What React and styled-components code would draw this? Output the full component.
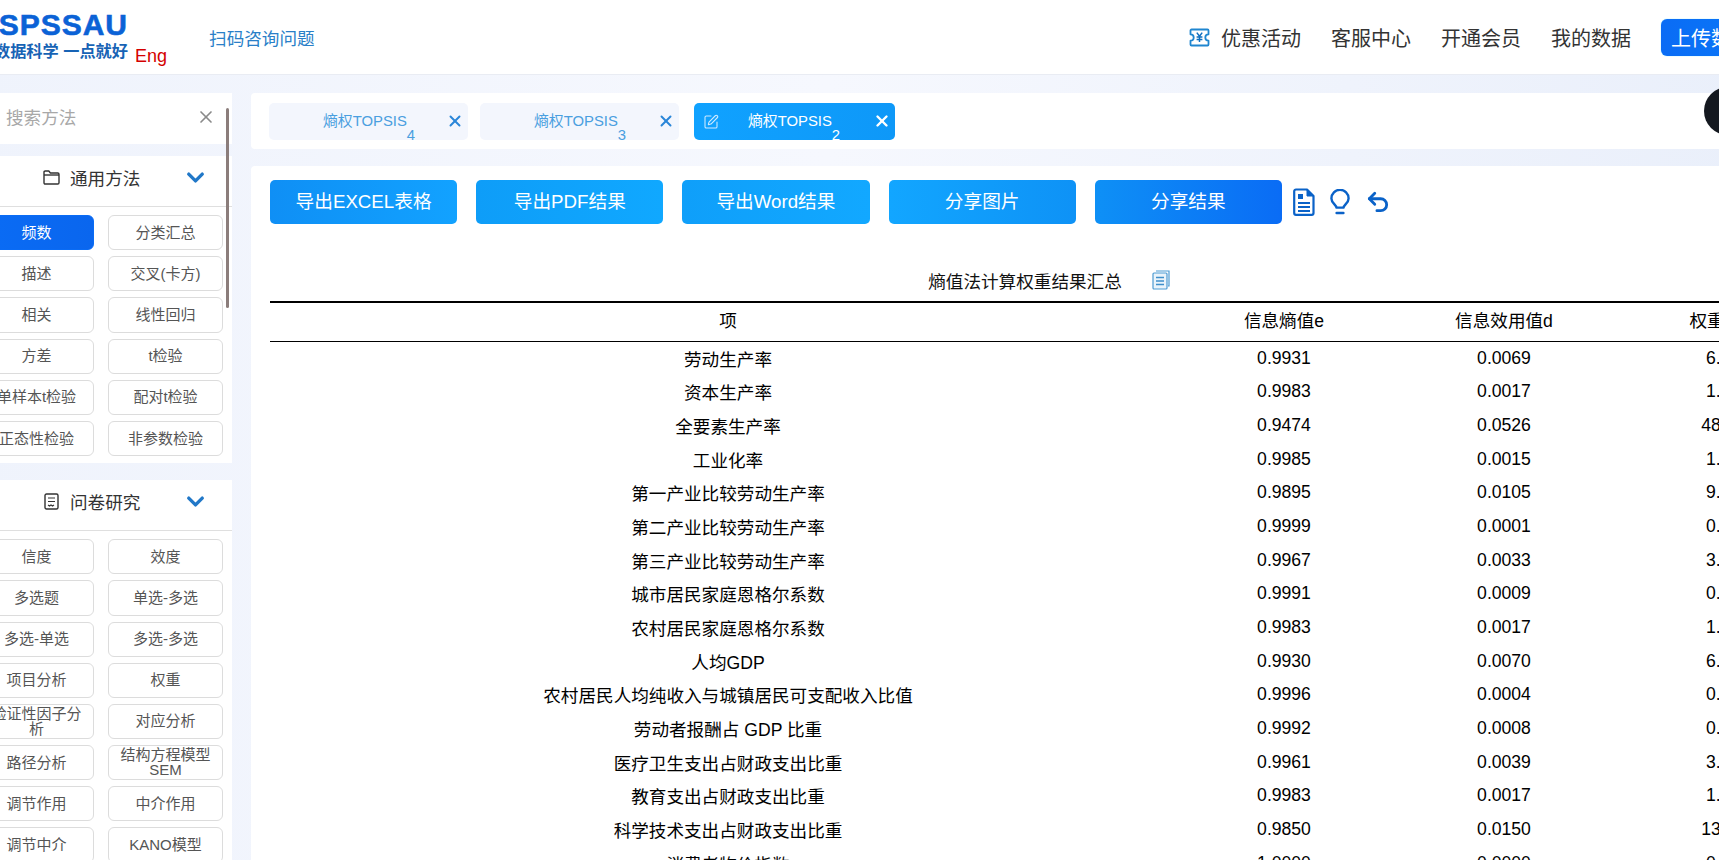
import React from "react";
import styled, { createGlobalStyle } from "styled-components";
import { ChevronDown, X, SquarePen, Undo2 } from "lucide-react";

const FONT = `"Liberation Sans", "Noto Sans CJK SC", sans-serif`;

const GlobalStyle = createGlobalStyle`
  html, body {
    margin: 0;
    height: 100%;
    overflow: hidden;
    background: #fff;
  }
  body {
    font-family: ${FONT};
  }
`;

const Page = styled.div`
  width: 1900px;
  height: 860px;
  margin-left: -28px;
  overflow: hidden;
  background: linear-gradient(90deg, #eff3fc 0%, #f6f8fe 45%, #e8eefa 100%);
`;

const Header = styled.header`
  height: 75px;
  display: flex;
  align-items: center;
  padding-right: 111px;
  background: #fff;
  border-bottom: 1px solid #e9ecf3;
  box-sizing: border-box;
`;

const Logo = styled.div`
  width: 156px;
  text-align: right;
  white-space: nowrap;
  margin-top: -3px;
`;

const LogoMark = styled.div`
  font-size: 30px;
  line-height: 31px;
  font-weight: 700;
  letter-spacing: 1px;
  color: #0b62d6;
  -webkit-text-stroke: 0.6px #0b62d6;
`;

const LogoSlogan = styled.div`
  font-size: 16.2px;
  line-height: 22px;
  font-weight: 700;
  color: #1763b5;
`;

const EngLink = styled.a`
  align-self: flex-end;
  margin: 0 0 7px 7px;
  font-size: 18px;
  line-height: 22px;
  color: #d40000;
`;

const QrLink = styled.a`
  margin-left: 42px;
  font-size: 17.6px;
  color: #2a7fc8;
`;

const Nav = styled.nav`
  margin-left: auto;
  display: flex;
  align-items: center;
  gap: 30px;
`;

const NavItem = styled.a`
  display: flex;
  align-items: center;
  gap: 11px;
  font-size: 20px;
  color: #333;
  white-space: nowrap;
`;

const UploadButton = styled.button`
  height: 37px;
  padding: 0 10px;
  border: 0;
  border-radius: 6px;
  background: linear-gradient(90deg, #0a6cf5, #0a78f8);
  box-shadow: 0 0 1px #3fe0ff;
  color: #fff;
  font-family: ${FONT};
  font-size: 20px;
  white-space: nowrap;
`;

const Body = styled.div`
  display: flex;
  gap: 19px;
  align-items: flex-start;
  padding-top: 18px;
`;

const Sidebar = styled.aside`
  position: relative;
  width: 260px;
  flex: none;
  display: flex;
  flex-direction: column;
`;

const ScrollThumb = styled.div`
  position: absolute;
  top: 15px;
  left: 254px;
  width: 3px;
  height: 200px;
  border-radius: 2px;
  background: #8b7d7b;
`;

const SearchBox = styled.div`
  height: 51px;
  display: flex;
  align-items: center;
  justify-content: space-between;
  padding: 0 16px 4px 34px;
  margin-bottom: 12px;
  box-sizing: border-box;
  background: #fff;
  font-size: 17.6px;
  color: #a8a8a8;
`;

const Section = styled.section`
  background: #fff;
  padding-bottom: 7px;
  margin-bottom: 17px;
`;

const SectionHead = styled.div`
  height: 51px;
  display: flex;
  align-items: center;
  gap: 10px;
  padding: 0 23px 8px 71px;
  border-bottom: 1px solid #dfdfdf;
  box-sizing: border-box;
  font-size: 17.6px;
  color: #333;

  > svg:last-child {
    margin-left: auto;
    color: #2178c8;
  }
`;

const MethodGrid = styled.div`
  display: grid;
  grid-template-columns: 115px 115px;
  grid-auto-rows: 35.2px;
  gap: 6px 14px;
  padding: 8px 9px 0 7px;
`;

const MethodButton = styled.button`
  padding: 0 6px 1px;
  border: 1px solid ${(p) => (p.$active ? "#0a6cf5" : "#dcdcdc")};
  border-radius: 6px;
  background: ${(p) => (p.$active ? "linear-gradient(90deg, #0a6cf5, #0a66ee)" : "#fff")};
  color: ${(p) => (p.$active ? "#fff" : "#555")};
  font-family: ${FONT};
  font-size: 15px;
  line-height: 15px;
`;

const Main = styled.main`
  flex: 1;
  min-width: 0;
  display: flex;
  flex-direction: column;
  gap: 17px;
`;

const TabBar = styled.div`
  position: relative;
  height: 56px;
  display: flex;
  align-items: center;
  gap: 12px;
  padding: 0 18px;
  background: #fff;
  border-radius: 4px 0 0 4px;
`;

const AvatarDot = styled.div`
  position: absolute;
  top: -6px;
  left: 1453px;
  width: 48px;
  height: 48px;
  border-radius: 50%;
  background: #14181f;
`;

const Tab = styled.div`
  position: relative;
  width: ${(p) => (p.$active ? "201px" : "199px")};
  height: 37px;
  flex: none;
  display: flex;
  align-items: center;
  margin-left: ${(p) => (p.$active ? "3px" : "0")};
  padding: 0 4px 3px 54px;
  box-sizing: border-box;
  border-radius: 5px;
  background: ${(p) => (p.$active ? "linear-gradient(90deg, #10a2ff, #0e98f8)" : "#f3f6fd")};
  color: ${(p) => (p.$active ? "#fff" : "#4a9fe0")};
  font-size: 14.85px;

  > svg:last-child {
    margin-left: auto;
    margin-top: 3px;
    color: ${(p) => (p.$active ? "#fff" : "#2a86d8")};
  }
`;

const TabEdit = styled(SquarePen)`
  position: absolute;
  left: 9px;
  top: 11px;
  color: #cfeaff;
`;

const TabIndex = styled.span`
  position: relative;
  top: 16px;
  line-height: 1;
`;

const Content = styled.div`
  padding: 14px 19px 0;
  height: 700px;
  background: #fff;
  border-radius: 4px 0 0 0;
`;

const Toolbar = styled.div`
  display: flex;
  align-items: center;
  gap: 19px;
`;

const ExportButton = styled.button`
  width: 187.2px;
  height: 44px;
  flex: none;
  padding: 0 0 5px;
  border: 0;
  border-radius: 5px;
  background: linear-gradient(90deg, ${(p) => p.$from}, ${(p) => p.$to});
  color: #fff;
  font-family: ${FONT};
  font-size: 18.7px;
`;

const ToolIcons = styled.div`
  display: flex;
  align-items: center;
  gap: 15px;
  margin-left: -8px;
  color: #0a62c8;
`;

const Caption = styled.div`
  width: 1558px;
  height: 39px;
  margin-top: 38px;
  padding-bottom: 3px;
  box-sizing: border-box;
  display: flex;
  align-items: center;
  justify-content: center;
  gap: 30px;
  font-size: 17.6px;
  color: #111;
`;

const ResultTable = styled.table`
  width: 1566px;
  table-layout: fixed;
  border-collapse: collapse;
  border-top: 2px solid #000;
  font-size: 17.6px;
  color: #000;
  text-align: center;

  th {
    height: 39px;
    padding: 0 0 5px;
    box-sizing: border-box;
    font-weight: 400;
    border-bottom: 1px solid #000;
  }
  td {
    height: 33.66px;
    padding: 0;
  }
`;

const sidebarGroups = [
  {
    title: "通用方法",
    icon: "folder",
    items: ["频数", "分类汇总", "描述", "交叉(卡方)", "相关", "线性回归", "方差", "t检验", "单样本t检验", "配对t检验", "正态性检验", "非参数检验"],
  },
  {
    title: "问卷研究",
    icon: "sheet",
    items: ["信度", "效度", "多选题", "单选-多选", "多选-单选", "多选-多选", "项目分析", "权重", "验证性因子分析", "对应分析", "路径分析", "结构方程模型SEM", "调节作用", "中介作用", "调节中介", "KANO模型"],
  },
];

const tabs = [
  { index: 4 },
  { index: 3 },
  { index: 2, active: true },
];

const exportButtons = [
  { label: "导出EXCEL表格", from: "#0f8ff5", to: "#12a2ff" },
  { label: "导出PDF结果", from: "#0e9df8", to: "#10a8ff" },
  { label: "导出Word结果", from: "#0f9ffa", to: "#12a8ff" },
  { label: "分享图片", from: "#12a6ff", to: "#0e92f6" },
  { label: "分享结果", from: "#0e90f6", to: "#0a6cf5" },
];

const rows = [
  ["劳动生产率", "0.9931", "0.0069", "6.39%"],
  ["资本生产率", "0.9983", "0.0017", "1.57%"],
  ["全要素生产率", "0.9474", "0.0526", "48.70%"],
  ["工业化率", "0.9985", "0.0015", "1.39%"],
  ["第一产业比较劳动生产率", "0.9895", "0.0105", "9.72%"],
  ["第二产业比较劳动生产率", "0.9999", "0.0001", "0.09%"],
  ["第三产业比较劳动生产率", "0.9967", "0.0033", "3.06%"],
  ["城市居民家庭恩格尔系数", "0.9991", "0.0009", "0.83%"],
  ["农村居民家庭恩格尔系数", "0.9983", "0.0017", "1.57%"],
  ["人均GDP", "0.9930", "0.0070", "6.48%"],
  ["农村居民人均纯收入与城镇居民可支配收入比值", "0.9996", "0.0004", "0.37%"],
  ["劳动者报酬占 GDP 比重", "0.9992", "0.0008", "0.74%"],
  ["医疗卫生支出占财政支出比重", "0.9961", "0.0039", "3.61%"],
  ["教育支出占财政支出比重", "0.9983", "0.0017", "1.57%"],
  ["科学技术支出占财政支出比重", "0.9850", "0.0150", "13.89%"],
  ["消费者物价指数", "1.0000", "0.0000", "0.00%"],
];

const TicketIcon = () => (
  <svg width="21" height="19" viewBox="0 0 21 19" fill="none" stroke="#1f86d0" strokeWidth="1.8" strokeLinejoin="round">
    <path d="M2.5 1.5h16a1 1 0 0 1 1 1v3.8a3.2 3.2 0 0 0 0 6.4v3.8a1 1 0 0 1-1 1h-16a1 1 0 0 1-1-1v-3.8a3.2 3.2 0 0 0 0-6.4V2.5a1 1 0 0 1 1-1z" />
    <path d="M7.8 4.6l2.7 3.6 2.7-3.6M10.5 8.2V14M7.6 9h5.8M7.6 11.4h5.8" stroke="#0f6fc0" strokeWidth="1.5" strokeLinejoin="miter" />
  </svg>
);

const FolderIcon = () => (
  <svg width="17" height="15" viewBox="0 0 17 15" fill="none" stroke="#333" strokeWidth="1.4" strokeLinejoin="round">
    <path d="M1 2.2c0-.7.5-1.2 1.2-1.2h3.6l1.6 2h7.4c.7 0 1.2.5 1.2 1.2v8.6c0 .7-.5 1.2-1.2 1.2H2.2c-.7 0-1.2-.5-1.2-1.2z" />
    <path d="M1 5h15" />
  </svg>
);

const SheetIcon = () => (
  <svg width="17" height="17" viewBox="-1 0 17 17" fill="none" stroke="#333" strokeWidth="1.4">
    <rect x="1" y="1" width="13" height="15" rx="1.5" />
    <path d="M4 5h7M4 8.5h7M4 12l1.5 1 1.5-1 1.5 1 1.5-1" strokeWidth="1.2" />
  </svg>
);

const DocIcon = () => (
  <svg width="22" height="28" viewBox="0 0 22 28" fill="none" stroke="#0a62c8" strokeWidth="2.2" strokeLinejoin="round">
    <path d="M3 1.5h11l6.5 6.5v17a1.8 1.8 0 0 1-1.8 1.8H3A1.8 1.8 0 0 1 1.2 25V3.3A1.8 1.8 0 0 1 3 1.5z" />
    <path d="M14 1.5V8h6.5" fill="#0a62c8" strokeWidth="1" />
    <path d="M5 6h5v5H5z" fill="#0a62c8" stroke="none" />
    <path d="M5 15h12M5 19h12M5 23h12" strokeWidth="2" />
  </svg>
);

const BulbIcon = () => (
  <svg width="20" height="26" viewBox="0 0 20 26" fill="none" stroke="#0a62c8" strokeWidth="2.4" strokeLinecap="round" strokeLinejoin="round">
    <path d="M6.4 18.6c0-2.6-5-4.4-5-9.2a8.6 8.6 0 0 1 17.2 0c0 4.8-5 6.6-5 9.2z" />
    <path d="M6.6 24h6.8" />
  </svg>
);

const CopyIcon = () => (
  <svg width="18" height="20" viewBox="0 0 18 20" fill="none" stroke="#4d9bd3" strokeWidth="1.2">
    <path d="M4 1h13v15h-1" />
    <rect x="1" y="3" width="14" height="16" rx="1" fill="#eaf4fb" />
    <path d="M4 7.5h8M4 11h8M4 14.5h8" strokeWidth="1.4" stroke="#3f8fcb" />
  </svg>
);

const App = () => {
  return (
    <Page>
      <GlobalStyle />
      <Header>
        <Logo>
          <LogoMark>SPSSAU</LogoMark>
          <LogoSlogan>数据科学 一点就好</LogoSlogan>
        </Logo>
        <EngLink>Eng</EngLink>
        <QrLink>扫码咨询问题</QrLink>
        <Nav>
          <NavItem>
            <TicketIcon />
            优惠活动
          </NavItem>
          <NavItem>客服中心</NavItem>
          <NavItem>开通会员</NavItem>
          <NavItem>我的数据</NavItem>
          <UploadButton>上传数据</UploadButton>
        </Nav>
      </Header>

      <Body>
        <Sidebar>
          <ScrollThumb />
          <SearchBox>
            搜索方法
            <X size={20} color="#8a8a8a" strokeWidth={2} />
          </SearchBox>
          {sidebarGroups.map((group) => (
            <Section key={group.title}>
              <SectionHead>
                {group.icon === "folder" ? <FolderIcon /> : <SheetIcon />}
                {group.title}
                <ChevronDown size={27} strokeWidth={3} />
              </SectionHead>
              <MethodGrid>
                {group.items.map((item) => (
                  <MethodButton key={item} $active={item === "频数"}>
                    {item}
                  </MethodButton>
                ))}
              </MethodGrid>
            </Section>
          ))}
        </Sidebar>

        <Main>
          <TabBar>
            {tabs.map((tab) => (
              <Tab key={tab.index} $active={tab.active}>
                {tab.active && <TabEdit size={16} strokeWidth={1.6} />}
                熵权TOPSIS
                <TabIndex>{tab.index}</TabIndex>
                <X size={18} strokeWidth={tab.active ? 3.2 : 2.6} />
              </Tab>
            ))}
            <AvatarDot />
          </TabBar>

          <Content>
            <Toolbar>
              {exportButtons.map((btn) => (
                <ExportButton key={btn.label} $from={btn.from} $to={btn.to}>
                  {btn.label}
                </ExportButton>
              ))}
              <ToolIcons>
                <DocIcon />
                <BulbIcon />
                <Undo2 size={26} strokeWidth={2.6} />
              </ToolIcons>
            </Toolbar>

            <Caption>
              熵值法计算权重结果汇总
              <CopyIcon />
            </Caption>

            <ResultTable>
              <colgroup>
                <col style={{ width: 916 }} />
                <col style={{ width: 196 }} />
                <col style={{ width: 244 }} />
                <col style={{ width: 210 }} />
              </colgroup>
              <thead>
                <tr>
                  <th>项</th>
                  <th>信息熵值e</th>
                  <th>信息效用值d</th>
                  <th>权重系数w</th>
                </tr>
              </thead>
              <tbody>
                {rows.map((row) => (
                  <tr key={row[0]}>
                    {row.map((cell, i) => (
                      <td key={i}>{cell}</td>
                    ))}
                  </tr>
                ))}
              </tbody>
            </ResultTable>
          </Content>
        </Main>
      </Body>
    </Page>
  );
};

export default App;
